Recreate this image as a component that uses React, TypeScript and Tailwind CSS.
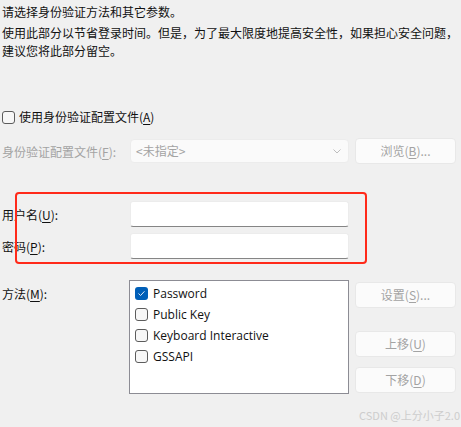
const FONT = "font-['Noto_Sans_CJK_SC','Noto_Sans',sans-serif]";

function Key({ k }: { k: string }) {
  return <span className="underline underline-offset-2">{k}</span>;
}

// full-width comma, the local CJK font draws it narrow
function Comma() {
  return <span className="inline-block w-[12px]">，</span>;
}

function Box({ checked = false }: { checked?: boolean }) {
  if (checked) {
    return (
      <span className="flex h-[13px] w-[13px] shrink-0 items-center justify-center rounded-[3px] bg-[#005fb8]">
        <svg width="9" height="9" viewBox="0 0 9 9" fill="none">
          <path d="M1.8 4.8 3.6 6.5 7.2 2.6" stroke="#dfe9f5" strokeWidth="1" strokeLinecap="round" strokeLinejoin="round" />
        </svg>
      </span>
    );
  }
  return <span className="h-[13px] w-[13px] shrink-0 rounded-[3px] border border-[#5c5c5c] bg-[#f7f7f7]" />;
}

function GhostButton({ children }: { children: React.ReactNode }) {
  return (
    <div className="flex h-[26px] w-[101px] items-center justify-center rounded-[4px] border border-[#e8e8e8] bg-[#fbfbfb] text-[#a3a3a3]">
      {children}
    </div>
  );
}

function TextInput() {
  return <div className="h-[26px] w-[219px] rounded-[3px] border border-[#ececec] border-b-[#858585] bg-white" />;
}

const METHODS = [
  { name: 'Password', checked: true },
  { name: 'Public Key', checked: false },
  { name: 'Keyboard Interactive', checked: false },
  { name: 'GSSAPI', checked: false },
];

export default function App() {
  return (
    <div
      lang="zh-CN"
      className={`relative h-[427px] w-[461px] overflow-hidden bg-[#f0f0f0] pl-[2px] text-[12px] leading-[18px] text-[#111] ${FONT}`}
    >
      <p className="mt-[3px]">请选择身份验证方法和其它参数。</p>
      <p className="mt-[3px] whitespace-nowrap">
        使用此部分以节省登录时间。但是<Comma />为了最大限度地提高安全性<Comma />如果担心安全问题<Comma />
        <br />
        建议您将此部分留空。
      </p>

      <label className="mt-[48px] flex h-[18px] items-center gap-[4px]">
        <span className="h-[13px] w-[13px] shrink-0 rounded-[3px] border border-[#5c5c5c] bg-[#f7f7f7]" />
        <span>
          使用身份验证配置文件(<Key k="A" />)
        </span>
      </label>

      <div className="mt-[12px] flex h-[25px] items-center">
        <span className="w-[128px] pt-[2px] text-[#a3a3a3]">
          身份验证配置文件(<Key k="F" />):
        </span>
        <div className="flex h-[24px] w-[219px] items-center justify-between rounded-[4px] border border-[#ececec] bg-[#fafafa] pr-[6px] pl-[5px] text-[#a3a3a3]">
          <span>&lt;未指定&gt;</span>
          <svg width="10" height="10" viewBox="0 0 10 10" fill="none">
            <path d="M1.5 3.5 5 7 8.5 3.5" stroke="#bdbdbd" strokeWidth="1" />
          </svg>
        </div>
        <div className="ml-[6px]">
          <GhostButton>
            <span>
              浏览(<Key k="B" />)...
            </span>
          </GhostButton>
        </div>
      </div>

      <div className="mt-[38px] flex flex-col gap-[6px]">
        <div className="flex items-center">
          <span className="w-[128px] pt-[1px]">
            用户名(<Key k="U" />):
          </span>
          <TextInput />
        </div>
        <div className="flex items-center">
          <span className="w-[128px] pt-[1px]">
            密码(<Key k="P" />):
          </span>
          <TextInput />
        </div>
      </div>

      <div className="mt-[21px] flex items-start">
        <span className="w-[127px] pt-[5px]">
          方法(<Key k="M" />):
        </span>
        <div className="flex h-[114px] w-[220px] flex-col border border-[#8c8c94] bg-white pt-[2px] pl-[5px] font-['Open_Sans','Noto_Sans',sans-serif] text-[12px]">
          {METHODS.map((m) => (
            <div key={m.name} className="flex h-[21px] items-center gap-[5px]">
              <Box checked={m.checked} />
              <span>{m.name}</span>
            </div>
          ))}
        </div>
        <div className="ml-[6px] flex flex-col pt-[2px]">
          <GhostButton>
            <span>
              设置(<Key k="S" />)...
            </span>
          </GhostButton>
          <div className="mt-[23px]">
            <GhostButton>
              <span>
                上移(<Key k="U" />)
              </span>
            </GhostButton>
          </div>
          <div className="mt-[10px]">
            <GhostButton>
              <span>
                下移(<Key k="D" />)
              </span>
            </GhostButton>
          </div>
        </div>
      </div>

      <div className="absolute top-[192px] left-[15px] h-[72px] w-[352px] rounded-[4px] border-2 border-[#ff2a1a]" />

      <div className="absolute right-[1px] bottom-[5px] text-[11px] leading-[14px] text-[#cdcdcd]">CSDN @上分小子2.0</div>
    </div>
  );
}
